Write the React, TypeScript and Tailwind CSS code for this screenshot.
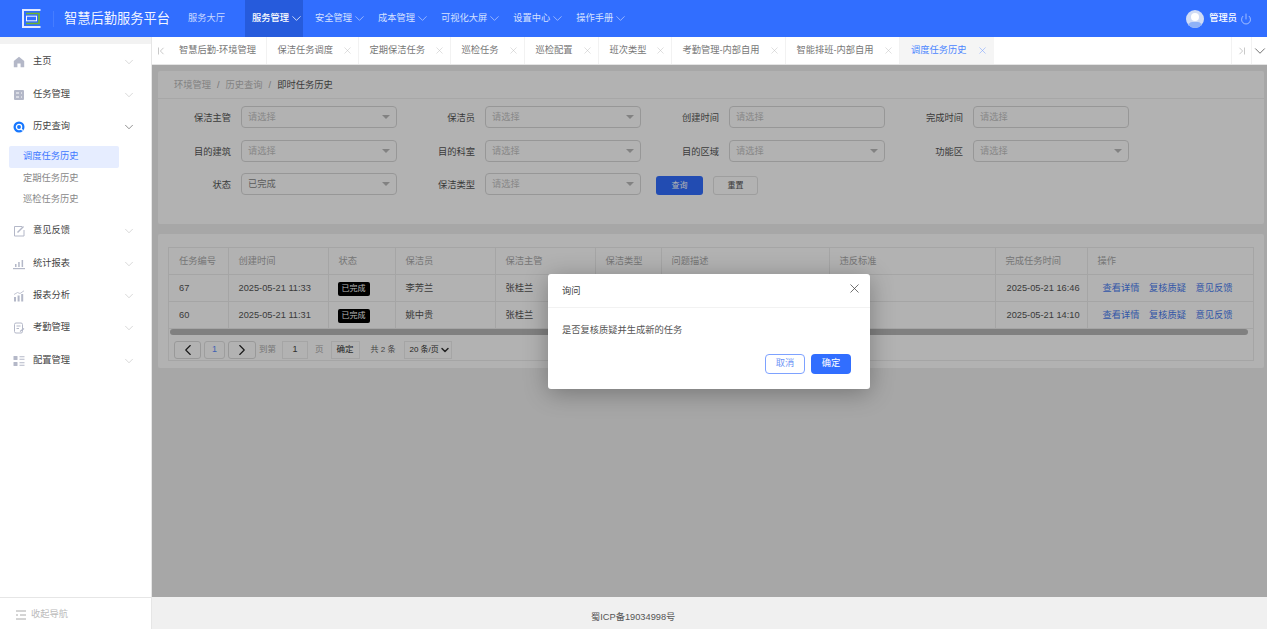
import { ChevronDown, ChevronLeft, ChevronRight, Power, X } from "lucide-react";
import type { ReactNode } from "react";

const topMenu = ["安全管理", "成本管理", "可视化大屏", "设置中心", "操作手册"];

const tabs = [
  { label: "智慧后勤-环境管理", w: "w-[97px]", pad: "pl-[9px]" },
  { label: "保洁任务调度", w: "w-[92px]", pad: "pl-[10.5px]", close: true },
  { label: "定期保洁任务", w: "w-[92px]", pad: "pl-[10.5px]", close: true },
  { label: "巡检任务", w: "w-[74px]", pad: "pl-[10.5px]", close: true },
  { label: "巡检配置", w: "w-[74px]", pad: "pl-[10.5px]", close: true },
  { label: "班次类型", w: "w-[73px]", pad: "pl-[10.5px]", close: true },
  { label: "考勤管理-内部自用", w: "w-[114px]", pad: "pl-[10.5px]", close: true },
  { label: "智能排班-内部自用", w: "w-[114px]", pad: "pl-[10.5px]", close: true },
];

function HomeIcon() {
  return (
    <svg viewBox="0 0 12 12" className="size-[12px]" fill="#b4b8c8">
      <path d="M6 .8 11.2 5v6.2H7.6V7.6H4.4v3.6H.8V5z" />
    </svg>
  );
}

function TaskIcon() {
  return (
    <svg viewBox="0 0 12 12" className="size-[12px]">
      <rect x="1" y="1" width="10" height="10" rx="1" fill="#b4b8c8" />
      <path d="M3 4h3M3 8h3M8 4h1M8 8h1" stroke="#fff" strokeWidth="1" />
    </svg>
  );
}

function SearchIcon() {
  return (
    <svg viewBox="0 0 12 12" className="size-[12px]">
      <circle cx="6" cy="6" r="5.5" fill="#1677ff" />
      <circle cx="6" cy="6" r="2.6" fill="none" stroke="#fff" strokeWidth="1.3" />
      <path d="M8 8l1.8 1.4" stroke="#fff" strokeWidth="1.3" />
    </svg>
  );
}

function EditIcon() {
  return (
    <svg viewBox="0 0 12 12" className="size-[12px]" fill="none" stroke="#b4b8c8">
      <path d="M9 1.5H1.5v9.5h9.5V5" />
      <path d="M4.5 7.5 10.5 1.5" strokeWidth="1.4" />
    </svg>
  );
}

function BarsIcon() {
  return (
    <svg viewBox="0 0 12 12" className="size-[12px]" fill="#b4b8c8">
      <rect x="0" y="10" width="12" height="1.2" />
      <rect x="2" y="6" width="1.5" height="3" />
      <rect x="5.2" y="4" width="1.5" height="5" />
      <rect x="8.6" y="2" width="1.5" height="7" />
    </svg>
  );
}

function AnalysisIcon() {
  return (
    <svg viewBox="0 0 12 12" className="size-[12px]" fill="#b4b8c8">
      <rect x="1" y="7" width="2" height="4.5" />
      <rect x="4.6" y="5.5" width="2" height="6" />
      <rect x="8.2" y="4" width="2" height="7.5" />
      <path d="M1 4.5 4.5 2.5 7 3.5 11 .8" fill="none" stroke="#b4b8c8" strokeWidth=".8" />
    </svg>
  );
}

function AttendIcon() {
  return (
    <svg viewBox="0 0 12 12" className="size-[12px]" fill="none" stroke="#b4b8c8">
      <rect x="1.5" y="1" width="8" height="10" rx="1.5" />
      <path d="M3.5 4h4M3.5 6.5h2.5" />
      <path d="M7 9.5 11 6.5" strokeWidth="1.3" />
    </svg>
  );
}

function ConfigIcon() {
  return (
    <svg viewBox="0 0 12 12" className="size-[12px]" fill="#b4b8c8">
      <rect x="0.5" y="1" width="4" height="4" rx=".6" />
      <rect x="0.5" y="7" width="4" height="4" rx=".6" />
      <path d="M6.5 1.2h5v1h-5zM6.5 3.8h5v1h-5zM6.5 7.2h5v1h-5zM6.5 9.8h5v1h-5z" />
    </svg>
  );
}

function NavRow({ icon, label, open }: { icon: ReactNode; label: string; open?: boolean }) {
  return (
    <div className="flex h-[32.4px] items-center pl-[13px] pr-[15px]">
      <span className="flex w-[20px] shrink-0">{icon}</span>
      <span className="flex-1 text-[9.25px] text-[#444]">{label}</span>
      <ChevronDown size={14} strokeWidth={1.1} className={open ? "text-[#555]" : "text-[#c4c4c4]"} />
    </div>
  );
}

function Field({ label, value, kind = "select" }: { label: string; value?: string; kind?: "select" | "date" }) {
  return (
    <div className="flex h-[22px] items-center">
      <span className="w-[73px] shrink-0 pt-[4px] text-right text-[9.25px] text-[#555]">{label}</span>
      <div className="ml-[10px] flex h-[22px] w-[156px] items-center justify-between rounded-[4px] border border-[#d9d9d9] bg-white pl-[6px] pr-[6px]">
        <span className={value ? "pt-[2px] text-[9.25px] text-[#888]" : "pt-[2px] text-[9.25px] text-[#c4c4c4]"}>{value ?? "请选择"}</span>
        {kind === "select" && (
          <span className="h-0 w-0 border-x-[4px] border-t-[4px] border-x-transparent border-t-[#bbb]" />
        )}
      </div>
    </div>
  );
}

const rows = [
  { id: "67", created: "2025-05-21 11:33", cleaner: "李芳兰", done: "2025-05-21 16:46" },
  { id: "60", created: "2025-05-21 11:31", cleaner: "姚中贵", done: "2025-05-21 14:10" },
];

const headers = ["任务编号", "创建时间", "状态", "保洁员", "保洁主管", "保洁类型", "问题描述", "违反标准", "完成任务时间", "操作"];

export default function App() {
  return (
    <div className="flex h-[629px] w-[1267px] flex-col overflow-hidden bg-white font-['Liberation_Sans','Noto_Sans_CJK_SC',sans-serif]">
      <header className="flex h-[37px] shrink-0 items-center bg-[#316eff] text-white">
        <svg viewBox="0 0 19 19" className="ml-[22px] size-[19px]">
          <path d="M18.5 1H1v17h17.5" fill="none" stroke="#e3eaff" strokeWidth="2" />
          <path d="M4 4.5H17V14.5H4" fill="none" stroke="#6fb52c" strokeWidth="1.6" />
          <rect x="4.5" y="7.2" width="10" height="4.6" fill="#316eff" stroke="#f2f5ff" strokeWidth="1" />
        </svg>
        <span className="ml-[12px] h-[16px] w-px bg-white/10" />
        <span className="ml-[10px] text-[13.25px] leading-none text-white/95">智慧后勤服务平台</span>
        <span className="ml-[18px] text-[9.25px] text-[#c9d9ff]">服务大厅</span>
        <div className="ml-[20px] flex h-full items-center gap-[3px] bg-[#265bdc] pl-[7px] pr-[2px] text-[9.25px] font-medium">
          服务管理
          <ChevronDown size={15} strokeWidth={1.2} className="-mx-[3px]" />
        </div>
        <nav className="ml-[12px] flex h-full items-center gap-[14px]">
          {topMenu.map((m) => (
            <span key={m} className="flex items-center gap-[3px] text-[9.25px] text-[#d5e1ff]">
              {m}
              <ChevronDown size={15} strokeWidth={1} className="-mx-[3px]" />
            </span>
          ))}
        </nav>
        <div className="ml-auto mr-[15px] flex items-center">
          <span className="relative size-[18px] overflow-hidden rounded-full bg-[#d0dcf5]">
            <span className="absolute left-[5px] top-[3px] size-[8px] rounded-full bg-white" />
            <span className="absolute left-[2px] top-[12px] h-[9px] w-[14px] rounded-full bg-[#8fb2f7]" />
          </span>
          <span className="ml-[5px] text-[9.25px] font-medium">管理员</span>
          <Power size={12} strokeWidth={1.1} className="ml-[3px]" />
        </div>
      </header>

      <div className="flex min-h-0 flex-1">
        <aside className="flex w-[152px] shrink-0 flex-col border-r border-[#e6e6e6] bg-white">
          <div className="h-[7px] shrink-0 bg-[#f2f2f2]" />
          <div className="flex-1 pt-[2px]">
            <NavRow icon={<HomeIcon />} label="主页" />
            <NavRow icon={<TaskIcon />} label="任务管理" />
            <NavRow icon={<SearchIcon />} label="历史查询" open />
            <div className="pb-[4px] pt-[2.5px]">
              <div className="ml-[9px] flex h-[22px] w-[110px] items-center rounded-[2px] bg-[#e6edff] pl-[14px] text-[9.25px] text-[#3f78ff]">
                调度任务历史
              </div>
              <div className="ml-[9px] flex h-[21.7px] items-center pl-[14px] text-[9.25px] text-[#888]">定期任务历史</div>
              <div className="ml-[9px] flex h-[21.7px] items-center pl-[14px] text-[9.25px] text-[#888]">巡检任务历史</div>
            </div>
            <NavRow icon={<EditIcon />} label="意见反馈" />
            <NavRow icon={<BarsIcon />} label="统计报表" />
            <NavRow icon={<AnalysisIcon />} label="报表分析" />
            <NavRow icon={<AttendIcon />} label="考勤管理" />
            <NavRow icon={<ConfigIcon />} label="配置管理" />
          </div>
          <div className="flex h-[32px] shrink-0 items-center border-t border-[#e6e6e6] pl-[15px] pt-[2px]">
            <svg viewBox="0 0 12 12" className="size-[12px]" stroke="#aaa" strokeWidth="1">
              <path d="M1 2h10M5 6h6M1 10h10M1 6h2" />
            </svg>
            <span className="ml-[4px] text-[9.25px] text-[#bbb]">收起导航</span>
          </div>
        </aside>

        <main className="flex min-w-0 flex-1 flex-col">
          <div className="flex h-[28px] shrink-0 items-stretch border-b border-[#e4e4e4] bg-white">
            <div className="flex w-[18px] items-center justify-center">
              <svg viewBox="0 0 8 8" className="size-[8px]" fill="none" stroke="#bbb" strokeWidth=".8">
                <path d="M1.5 .5v7M6.5 .8 3.4 4l3.1 3.2" />
              </svg>
            </div>
            {tabs.map((t) => (
              <div key={t.label} className={`flex items-center justify-between border-r border-[#f2f2f2] pr-[5px] ${t.pad} ${t.w}`}>
                <span className="whitespace-nowrap text-[9.25px] text-[#777]">{t.label}</span>
                {t.close && <X size={11} strokeWidth={1} className="text-[#bbb]" />}
              </div>
            ))}
            <div className="flex w-[94px] items-center justify-between bg-[#f5f5f5] pl-[11px] pr-[6px]">
              <span className="whitespace-nowrap text-[9.25px] text-[#4c86ff]">调度任务历史</span>
              <X size={11} strokeWidth={1.2} className="text-[#7aa2ff]" />
            </div>
            <div className="flex-1" />
            <div className="flex w-[20px] items-center justify-center border-l border-[#f2f2f2]">
              <svg viewBox="0 0 8 8" className="size-[8px]" fill="none" stroke="#bbb" strokeWidth=".8">
                <path d="M6.5 .5v7M1.5 .8 4.6 4 1.5 7.2" />
              </svg>
            </div>
            <div className="flex w-[16px] items-center justify-center border-l border-[#f2f2f2]">
              <ChevronDown size={18} strokeWidth={1.1} className="shrink-0 text-[#555]" />
            </div>
          </div>

          <div className="relative min-h-0 flex-1 bg-[#f0f0f0] pl-[6px] pr-[3px] pt-[6px]">
            <section className="h-[153px] rounded-[2px] bg-white">
              <div className="flex h-[28px] items-center gap-[6px] border-b border-[#efefef] pl-[16px] pt-[3px] text-[9.25px]">
                <span className="text-[#bbb]">环境管理</span>
                <span className="text-[#aaa]">/</span>
                <span className="text-[#bbb]">历史查询</span>
                <span className="text-[#aaa]">/</span>
                <span className="text-[#555]">即时任务历史</span>
              </div>
              <div className="grid grid-cols-[244px_244px_244px_244px] gap-y-[11.5px] pt-[7px]">
                <Field label="保洁主管" />
                <Field label="保洁员" />
                <Field label="创建时间" kind="date" />
                <Field label="完成时间" kind="date" />
                <Field label="目的建筑" />
                <Field label="目的科室" />
                <Field label="目的区域" />
                <Field label="功能区" />
                <Field label="状态" value="已完成" />
                <Field label="保洁类型" />
                <div className="flex items-center gap-[10px] pl-[10px] pt-[3px]">
                  <span className="flex h-[19px] w-[47px] items-center justify-center rounded-[3px] bg-[#316eff] text-[8px] text-white">查询</span>
                  <span className="flex h-[19px] w-[45px] items-center justify-center rounded-[3px] border border-[#e2e2e2] bg-white text-[8px] text-[#555]">重置</span>
                </div>
              </div>
            </section>

            <section className="mt-[10px] h-[134px] rounded-[2px] bg-white pl-[10px] pt-[13px]">
              <div className="h-[114px] w-[1086px] border border-[#ececec]">
                <table className="w-[1084px] table-fixed border-collapse text-left text-[9.25px]">
                  <colgroup>
                    <col className="w-[59px]" />
                    <col className="w-[100px]" />
                    <col className="w-[67px]" />
                    <col className="w-[100px]" />
                    <col className="w-[100px]" />
                    <col className="w-[66px]" />
                    <col className="w-[168px]" />
                    <col className="w-[166px]" />
                    <col className="w-[92px]" />
                    <col className="w-[166px]" />
                  </colgroup>
                  <thead>
                    <tr className="h-[26px]">
                      {headers.map((h) => (
                        <th key={h} className="border-b border-r border-[#ececec] pl-[10px] pt-[2px] font-normal text-[#aaa]">
                          {h}
                        </th>
                      ))}
                    </tr>
                  </thead>
                  <tbody>
                    {rows.map((r) => (
                      <tr key={r.id} className="h-[27px] text-[#555]">
                        <td className="border-b border-r border-[#ececec] pl-[10px] pt-[3px]">{r.id}</td>
                        <td className="border-b border-r border-[#ececec] pl-[10px] pt-[3px]">{r.created}</td>
                        <td className="border-b border-r border-[#ececec] pl-[9px] pt-[2px]">
                          <span className="inline-flex h-[14px] w-[32px] items-center justify-center rounded-[2px] bg-black text-[8px] text-white">已完成</span>
                        </td>
                        <td className="border-b border-r border-[#ececec] pl-[10px] pt-[3px]">{r.cleaner}</td>
                        <td className="border-b border-r border-[#ececec] pl-[10px] pt-[3px]">张桂兰</td>
                        <td className="border-b border-r border-[#ececec]" />
                        <td className="border-b border-r border-[#ececec]" />
                        <td className="border-b border-r border-[#ececec]" />
                        <td className="whitespace-nowrap border-b border-r border-[#ececec] pl-[11px] pt-[3px]">{r.done}</td>
                        <td className="border-b border-[#ececec] pl-[15px] pt-[3px] text-[#4a7cf0]">
                          <span className="flex gap-[9.5px]">
                            <span>查看详情</span>
                            <span>复核质疑</span>
                            <span>意见反馈</span>
                          </span>
                        </td>
                      </tr>
                    ))}
                  </tbody>
                </table>
                <div className="ml-px h-[6px] w-[1078px] rounded-full bg-[#b8b8b8]" />
                <div className="mt-[6px] flex h-[18px] items-center pl-[5px] text-[9px]">
                  <span className="flex h-[18px] w-[27px] items-center justify-center rounded-[3px] border border-[#dcdcdc] text-[#222]">
                    <ChevronLeft size={18} strokeWidth={1.5} className="shrink-0" />
                  </span>
                  <span className="ml-[3px] flex h-[18px] w-[21px] items-center justify-center rounded-[3px] border border-[#e2e2e2] text-[#5c8cff]">1</span>
                  <span className="ml-[3px] flex h-[18px] w-[28px] items-center justify-center rounded-[3px] border border-[#dcdcdc] text-[#222]">
                    <ChevronRight size={18} strokeWidth={1.5} className="shrink-0" />
                  </span>
                  <span className="ml-[3px] text-[8.5px] text-[#aaa]">到第</span>
                  <span className="ml-[6px] flex h-[18px] w-[26px] items-center justify-center border border-[#ececec] text-[#444]">1</span>
                  <span className="ml-[7px] text-[8.5px] text-[#aaa]">页</span>
                  <span className="ml-[7px] flex h-[18px] w-[29px] items-center justify-center border border-[#ececec] text-[8.5px] text-[#333]">确定</span>
                  <span className="ml-[11px] text-[8px] text-[#666]">共 2 条</span>
                  <span className="ml-[9px] flex h-[18px] w-[48px] items-center justify-between whitespace-nowrap border border-[#ececec] pl-[4px] pr-[1px] text-[8px] text-[#333]">
                    20 条/页
                    <ChevronDown size={12} strokeWidth={3} className="shrink-0" />
                  </span>
                </div>
              </div>
            </section>

            <div className="absolute inset-0 flex items-center justify-center bg-black/30 pr-[1px]">
              <div className="w-[322px] rounded-[3px] bg-white shadow-[0_4px_24px_rgba(0,0,0,0.3)]">
                <div className="flex h-[34px] items-center justify-between border-b border-[#f2f2f2] pl-[14px] pr-[8px]">
                  <span className="pt-[3px] text-[9.25px] text-[#444]">询问</span>
                  <X size={15} strokeWidth={1.2} className="-mt-[4px] text-[#444]" />
                </div>
                <div className="pb-[15px] pl-[14px] pr-[19px] pt-[16px]">
                  <p className="text-[9.25px] leading-[13px] text-[#555]">是否复核质疑并生成新的任务</p>
                  <div className="mt-[17px] flex justify-end gap-[6px]">
                    <span className="flex h-[20px] w-[40px] items-center justify-center rounded-[4px] border border-[#7ea2ff] text-[9.25px] text-[#6f95f5]">取消</span>
                    <span className="flex h-[20px] w-[40px] items-center justify-center rounded-[4px] bg-[#316eff] text-[9.25px] text-white">确定</span>
                  </div>
                </div>
              </div>
            </div>
          </div>

          <footer className="flex h-[32px] shrink-0 items-center bg-[#f0f0f0] pl-[439px] pt-[10px] text-[9.25px] text-[#555]">
            蜀ICP备19034998号
          </footer>
        </main>
      </div>
    </div>
  );
}
